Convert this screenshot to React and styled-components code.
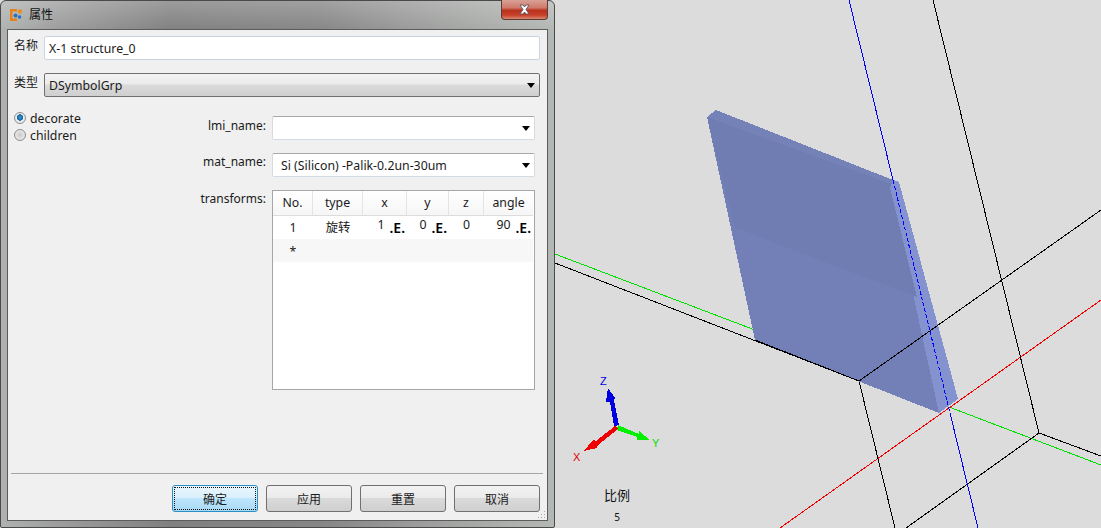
import React from 'react';
import styled, { createGlobalStyle, css } from 'styled-components';

const UI_FONT = `'Noto Sans', 'Noto Sans CJK SC', sans-serif`;

const GlobalStyle = createGlobalStyle`
  html, body {
    margin: 0;
    height: 100%;
    overflow: hidden;
    background: #dcdcdc;
  }
  #root {
    height: 100%;
  }
`;

const Page = styled.div`
  display: flex;
  height: 528px;
  font-family: ${UI_FONT};
  font-size: 12.3px;
  color: #1a1a1a;
`;

const Dialog = styled.div`
  width: 555px;
  flex: none;
  box-sizing: border-box;
  display: flex;
  flex-direction: column;
  border: 1px solid #4a4a4a;
  border-radius: 6px 6px 2px 2px;
  background:
    linear-gradient(180deg, rgba(255, 255, 255, 0.22), rgba(255, 255, 255, 0) 30px),
    linear-gradient(90deg, #b0b2b2 0, #9c9c9c 60px, #808080 170px, #868686 320px, #a6a8a6 470px, #b4b8b4 554px);
`;

const TitleBar = styled.div`
  height: 28px;
  flex: none;
  display: flex;
  align-items: flex-start;
  padding-left: 8px;
`;

const TitleIcon = styled.svg`
  width: 14px;
  height: 14px;
  margin-top: 7px;
`;

const TitleText = styled.span`
  margin: 5px 0 0 6px;
  font-size: 12px;
  line-height: 18px;
  color: #111;
`;

const CloseButton = styled.div`
  width: 47px;
  height: 20px;
  margin: -1px 6px 0 auto;
  box-sizing: border-box;
  border: 1px solid #5e3a36;
  border-top: none;
  border-radius: 0 0 4px 4px;
  display: flex;
  align-items: center;
  justify-content: center;
  background: linear-gradient(180deg, #d9a196 0, #cf7b6c 40%, #b8321e 55%, #c8402a 80%, #d88a70 100%);
`;

const Client = styled.div`
  flex: 1;
  min-height: 0;
  margin: 0 6px 6px 6px;
  box-sizing: border-box;
  border: 1px solid #5c5c5c;
  background: #f0f0f0;
  display: flex;
  flex-direction: column;
  padding: 6px 7px 8px 6px;
  position: relative;
`;

const FieldRow = styled.div`
  display: flex;
  align-items: flex-start;
  margin-bottom: 13px;
`;

const RowLabel = styled.label`
  width: 30px;
  flex: none;
  font-size: 12px;
  line-height: 18px;
  margin-top: 1px;
`;

const TextInput = styled.div`
  flex: 1;
  height: 24px;
  box-sizing: border-box;
  padding: 1px 0 0 4px;
  line-height: 22px;
  background: #fff;
  border: 1px solid #c8d6e4;
  border-radius: 2px;
`;

const Arrow = styled.i`
  width: 0;
  height: 0;
  flex: none;
  border-left: 4px solid transparent;
  border-right: 4px solid transparent;
  border-top: 5px solid #000;
`;

const Combo = styled.div`
  flex: 1;
  height: 24px;
  box-sizing: border-box;
  display: flex;
  align-items: center;
  justify-content: space-between;
  border-radius: 2px;
  ${(p) => p.$flat
    ? css`
      padding: 0 4px 0 8px;
      background: #fff;
      border: 1px solid #d4dbe2;
      border-top-color: #a8a8a8;
    `
    : css`
      padding: 0 4px;
      background: linear-gradient(180deg, #f2f2f2 0, #ebebeb 46%, #dadada 50%, #cfcfcf 100%);
      border: 1px solid #707070;
    `}
`;

const Body = styled.div`
  flex: 1;
  min-height: 0;
  display: flex;
  justify-content: space-between;
  padding-right: 5px;
`;

const RadioGroup = styled.div`
  display: flex;
  flex-direction: column;
  gap: 1px;
`;

const RadioRow = styled.div`
  display: flex;
  align-items: center;
  gap: 4px;
  height: 16px;
`;

const RadioDot = styled.span`
  width: 12px;
  height: 12px;
  box-sizing: border-box;
  border-radius: 50%;
  border: 1px solid #8c8c8c;
  ${(p) => p.$checked
    ? css`background: radial-gradient(circle at 50% 45%, #2f9fe0 0, #1a5f95 3px, #eef2f5 3.4px, #d8dde2 100%);`
    : css`background: radial-gradient(circle at 50% 50%, #c8c8c8 0, #dedede 3px, #f0f0f0 100%);`}
`;

const Form = styled.div`
  width: 336px;
  display: grid;
  grid-template-columns: 73px 263px;
  grid-template-rows: 24px 24px 200px;
  row-gap: 13px;
  margin-top: 6px;
`;

const FormLabel = styled.label`
  justify-self: end;
  padding-right: 6px;
  font-size: 12px;
  line-height: 18px;
  margin-top: ${(p) => p.$top || '0px'};
`;

const Table = styled.div`
  box-sizing: border-box;
  background: #fff;
  border: 1px solid #a6a6a6;
  padding-right: 1px;
`;

const TableRow = styled.div`
  display: grid;
  grid-template-columns: 40px 50px 44px 42px 35px 49px;
  background: ${(p) => p.$bg || '#fff'};
  height: ${(p) => p.$height};
`;

const HeaderCell = styled.div`
  text-align: center;
  line-height: 24px;
  border-right: 1px solid #e4e4e4;
  border-bottom: 1px solid #dcdcdc;
  background: linear-gradient(180deg, #fff 0, #f6f6f6 100%);
  &:last-child {
    border-right: none;
  }
`;

const Cell = styled.div`
  text-align: center;
  line-height: 26px;
`;

const RaisedCell = styled(Cell)`
  line-height: 19px;
`;

const NumCell = styled.div`
  display: flex;
  justify-content: flex-end;
  align-items: flex-start;
  gap: 5px;
  padding-right: 2px;
  line-height: 19px;
`;

const EditMark = styled.b`
  font-size: 14px;
  font-weight: 600;
  line-height: 26px;
  color: #000;
`;

const Separator = styled.div`
  height: 1px;
  flex: none;
  margin: 0 -3px;
  background: #a5a5a5;
`;

const ButtonRow = styled.div`
  display: flex;
  justify-content: flex-end;
  gap: 8px;
  margin-top: 11px;
`;

const Button = styled.div`
  width: 86px;
  height: 27px;
  box-sizing: border-box;
  display: flex;
  align-items: center;
  justify-content: center;
  font-size: 12px;
  border-radius: 3px;
  border: 1px solid #707070;
  background: linear-gradient(180deg, #f2f2f2 0, #ebebeb 46%, #dadada 50%, #cfcfcf 100%);
  ${(p) => p.$primary && css`
    border-color: #2c8fc4;
    background: linear-gradient(180deg, #eaf6fd 0, #d9f0fc 46%, #bee6fd 50%, #a7d9f5 100%);
    outline: 1px dotted #111;
    outline-offset: -3px;
  `}
`;

const SizeGrip = styled.svg`
  position: absolute;
  right: 1px;
  bottom: 1px;
  width: 8px;
  height: 8px;
`;

const Viewport = styled.div`
  flex: 1;
  position: relative;
  background: #dcdcdc;
  overflow: hidden;
`;

const Scene = styled.svg`
  display: block;
  width: 100%;
  height: 100%;
`;

const AxisLabel = styled.text`
  font-family: 'Liberation Sans', sans-serif;
  font-size: 11px;
  fill: ${(p) => p.$color};
`;

const ScaleBox = styled.div`
  position: absolute;
  left: 42px;
  top: 487px;
  width: 40px;
  text-align: center;
  font-size: 13px;
  color: #111;
  line-height: 16px;
`;

const ScaleValue = styled.div`
  margin-top: 6px;
  font-size: 10px;
`;

const columns = ['No.', 'type', 'x', 'y', 'z', 'angle'];

function PropertyTable() {
  return (
    <Table>
      <TableRow $height="24px">
        {columns.map((c) => <HeaderCell key={c}>{c}</HeaderCell>)}
      </TableRow>
      <TableRow $height="24px">
        <Cell>1</Cell>
        <Cell>旋转</Cell>
        <NumCell>1<EditMark>.E.</EditMark></NumCell>
        <NumCell>0<EditMark>.E.</EditMark></NumCell>
        <RaisedCell>0</RaisedCell>
        <NumCell>90<EditMark>.E.</EditMark></NumCell>
      </TableRow>
      <TableRow $height="23px" $bg="#f7f7f7">
        <Cell>*</Cell>
      </TableRow>
    </Table>
  );
}

function AxisScene() {
  return (
    <Scene viewBox="555 0 546 528" shapeRendering="crispEdges">
      <g fill="none" strokeWidth="1">
        <path d="M555 254L755 330" stroke="#00e000" />
        <path d="M949 407L1101 465" stroke="#00e000" />
        <path d="M780 528L1101 300" stroke="#f00000" />
        <path d="M933 0L1039 433L1101 456M1039 433L906 528" stroke="#000" />
        <path d="M859 381L895 528" stroke="#000" />
        <path d="M555 263L859 381" stroke="#000" />
      </g>

      <path d="M893 180L899 182L958 399L939 413L890 188Z" fill="#8492cf" />
      <path d="M707 117L716 110L893 180L890 188L939 413L858 381L755 340Z" fill="#7280b7" />
      <path d="M735 228L917 297L890 188L893 180L716 110L707 117Z" fill="#707db2" />
      <path d="M707 117L716 110L893 180L891 184Z" fill="#7482b8" />

      <g fill="none" strokeWidth="1">
        <path d="M755 340L859 381L1101 210" stroke="#000" />
        <path d="M849 0L893 180M950 413L978 528" stroke="#0000ff" />
        <path d="M893 180L950 413" stroke="#0000ff" strokeDasharray="4 2" />
      </g>

      <path d="M608 388L615 398L614 401L619 425L614 426L610 402L606 402Z" fill="#0000e0" />
      <path d="M618 425L639 434L639 431L650 440L637 440L637 437L617 430Z" fill="#00f000" />
      <path d="M615 426L618 429L598 445L597 448L584 451L593 440L596 441Z" fill="#f00000" />
      <AxisLabel x="600" y="385" $color="#0000e0">Z</AxisLabel>
      <AxisLabel x="652" y="447" $color="#00e000">Y</AxisLabel>
      <AxisLabel x="573" y="461" $color="#e00000">X</AxisLabel>
    </Scene>
  );
}

export default function App() {
  return (
    <Page>
      <GlobalStyle />
      <Dialog>
        <TitleBar>
          <TitleIcon viewBox="0 0 14 14">
            <path d="M1 1h7v2.500H3.500v7H8V13H1z" fill="#e8801c" />
            <circle cx="6.500" cy="7.500" r="2" fill="#2a6fc0" />
            <circle cx="11" cy="3.500" r="2.200" fill="#e8901c" />
            <circle cx="10.500" cy="9" r="1.800" fill="#2a6fc0" />
          </TitleIcon>
          <TitleText>属性</TitleText>
          <CloseButton>
            <svg width="13" height="11" viewBox="0 0 13 11">
              <path d="M2 1h3l1.500 2L8 1h3L8 5.500 11 10H8L6.500 8 5 10H2l3-4.500z" fill="#fff" stroke="#4a4a55" strokeWidth="0.8" />
            </svg>
          </CloseButton>
        </TitleBar>
        <Client>
          <FieldRow>
            <RowLabel>名称</RowLabel>
            <TextInput>X-1 structure_0</TextInput>
          </FieldRow>
          <FieldRow>
            <RowLabel>类型</RowLabel>
            <Combo>DSymbolGrp<Arrow /></Combo>
          </FieldRow>
          <Body>
            <RadioGroup>
              <RadioRow><RadioDot $checked />decorate</RadioRow>
              <RadioRow><RadioDot />children</RadioRow>
            </RadioGroup>
            <Form>
              <FormLabel $top="1px">lmi_name:</FormLabel>
              <Combo $flat><span /><Arrow /></Combo>
              <FormLabel>mat_name:</FormLabel>
              <Combo $flat>Si (Silicon) -Palik-0.2un-30um<Arrow /></Combo>
              <FormLabel>transforms:</FormLabel>
              <PropertyTable />
            </Form>
          </Body>
          <Separator />
          <ButtonRow>
            <Button $primary>确定</Button>
            <Button>应用</Button>
            <Button>重置</Button>
            <Button>取消</Button>
          </ButtonRow>
          <SizeGrip viewBox="0 0 8 8">
            <path d="M6 0h1v1H6zM3 3h1v1H3zM6 3h1v1H6zM0 6h1v1H0zM3 6h1v1H3zM6 6h1v1H6z" fill="#a8a8a8" />
          </SizeGrip>
        </Client>
      </Dialog>
      <Viewport>
        <AxisScene />
        <ScaleBox>
          比例
          <ScaleValue>5</ScaleValue>
        </ScaleBox>
      </Viewport>
    </Page>
  );
}
